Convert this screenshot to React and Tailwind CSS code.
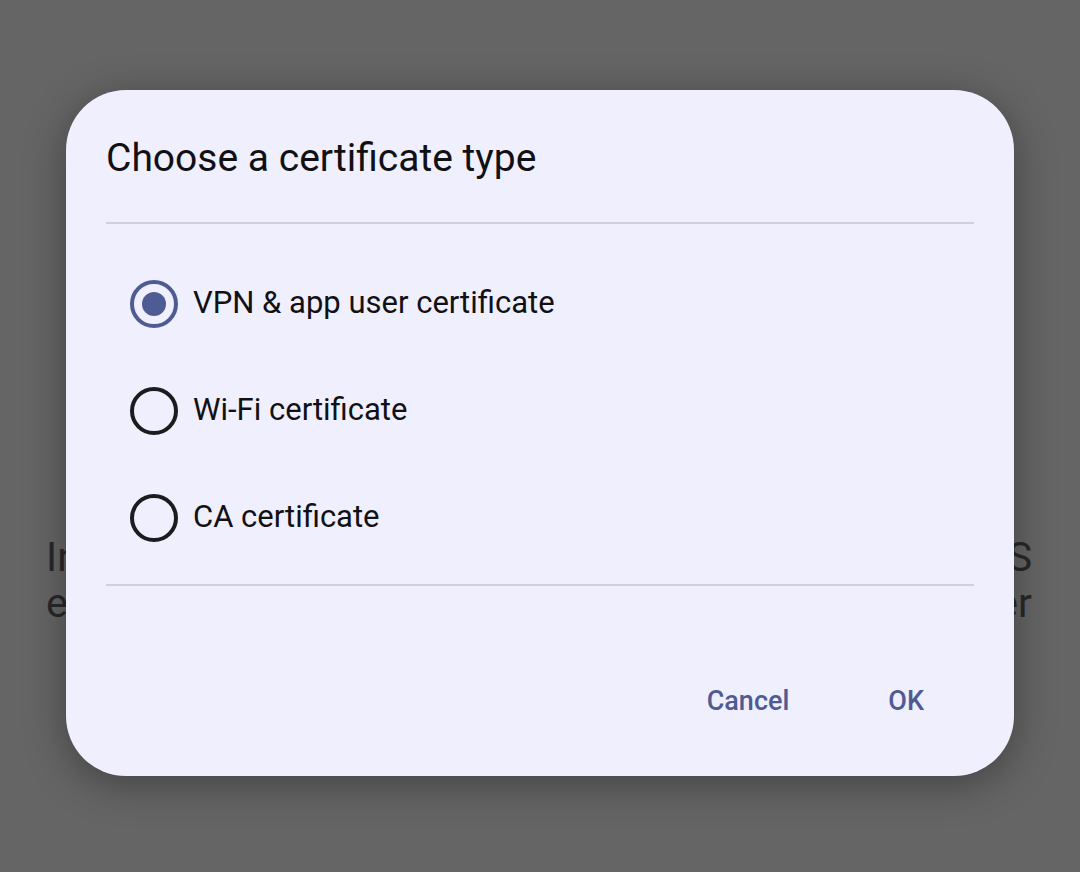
import React from "react";

function Radio({ checked }) {
  return (
    <div className="w-[48px] h-[48px] shrink-0 flex items-center justify-center">
      {checked ? (
        <div className="w-[48px] h-[48px] rounded-full border-[4.5px] border-[#4f5b93] flex items-center justify-center">
          <div className="w-[24px] h-[24px] rounded-full bg-[#4f5b93]" />
        </div>
      ) : (
        <div className="w-[48px] h-[48px] rounded-full border-[4.5px] border-[#1c1b1f]" />
      )}
    </div>
  );
}

export default function App() {
  const options = [
    { label: "VPN & app user certificate", checked: true },
    { label: "Wi-Fi certificate", checked: false },
    { label: "CA certificate", checked: false },
  ];
  return (
    <div
      className="relative w-[1080px] h-[872px] overflow-hidden bg-[#656565]"
      style={{ fontFamily: "Roboto, 'Noto Sans', sans-serif" }}
    >
      <div className="pt-[534px] pl-[46px] pr-[48px] text-[#282828] text-[41px] leading-[46px]">
        <div className="flex justify-between">
          <span>Install</span>
          <span>TLS</span>
        </div>
        <div className="flex justify-between">
          <span>encrypt</span>
          <span>other</span>
        </div>
      </div>

      <div className="absolute left-[66px] top-[90px] w-[948px] h-[686px] rounded-[60px] bg-[#f0effd] shadow-[0_8px_40px_rgba(0,0,0,0.35)] flex flex-col">
        <div className="pt-[47px] px-[40px] text-[39px] leading-[43px] text-[#111114]">
          Choose a certificate type
        </div>
        <div className="mt-[42px] mx-[40px] h-[2px] bg-[#d1d0dc]" />
        <div className="pt-[26px] flex flex-col">
          {options.map((o) => (
            <div key={o.label} className="h-[107px] flex items-center pl-[64px] gap-[15px]">
              <Radio checked={o.checked} />
              <span className="text-[31px] text-[#111114]">{o.label}</span>
            </div>
          ))}
        </div>
        <div className="mt-[13px] mx-[40px] h-[2px] bg-[#d1d0dc]" />
        <div className="flex-1 flex items-center justify-end pr-[90px] pt-[40px] gap-[99px] text-[27px] font-medium text-[#4f5b93]">
          <span>Cancel</span>
          <span>OK</span>
        </div>
      </div>
    </div>
  );
}
